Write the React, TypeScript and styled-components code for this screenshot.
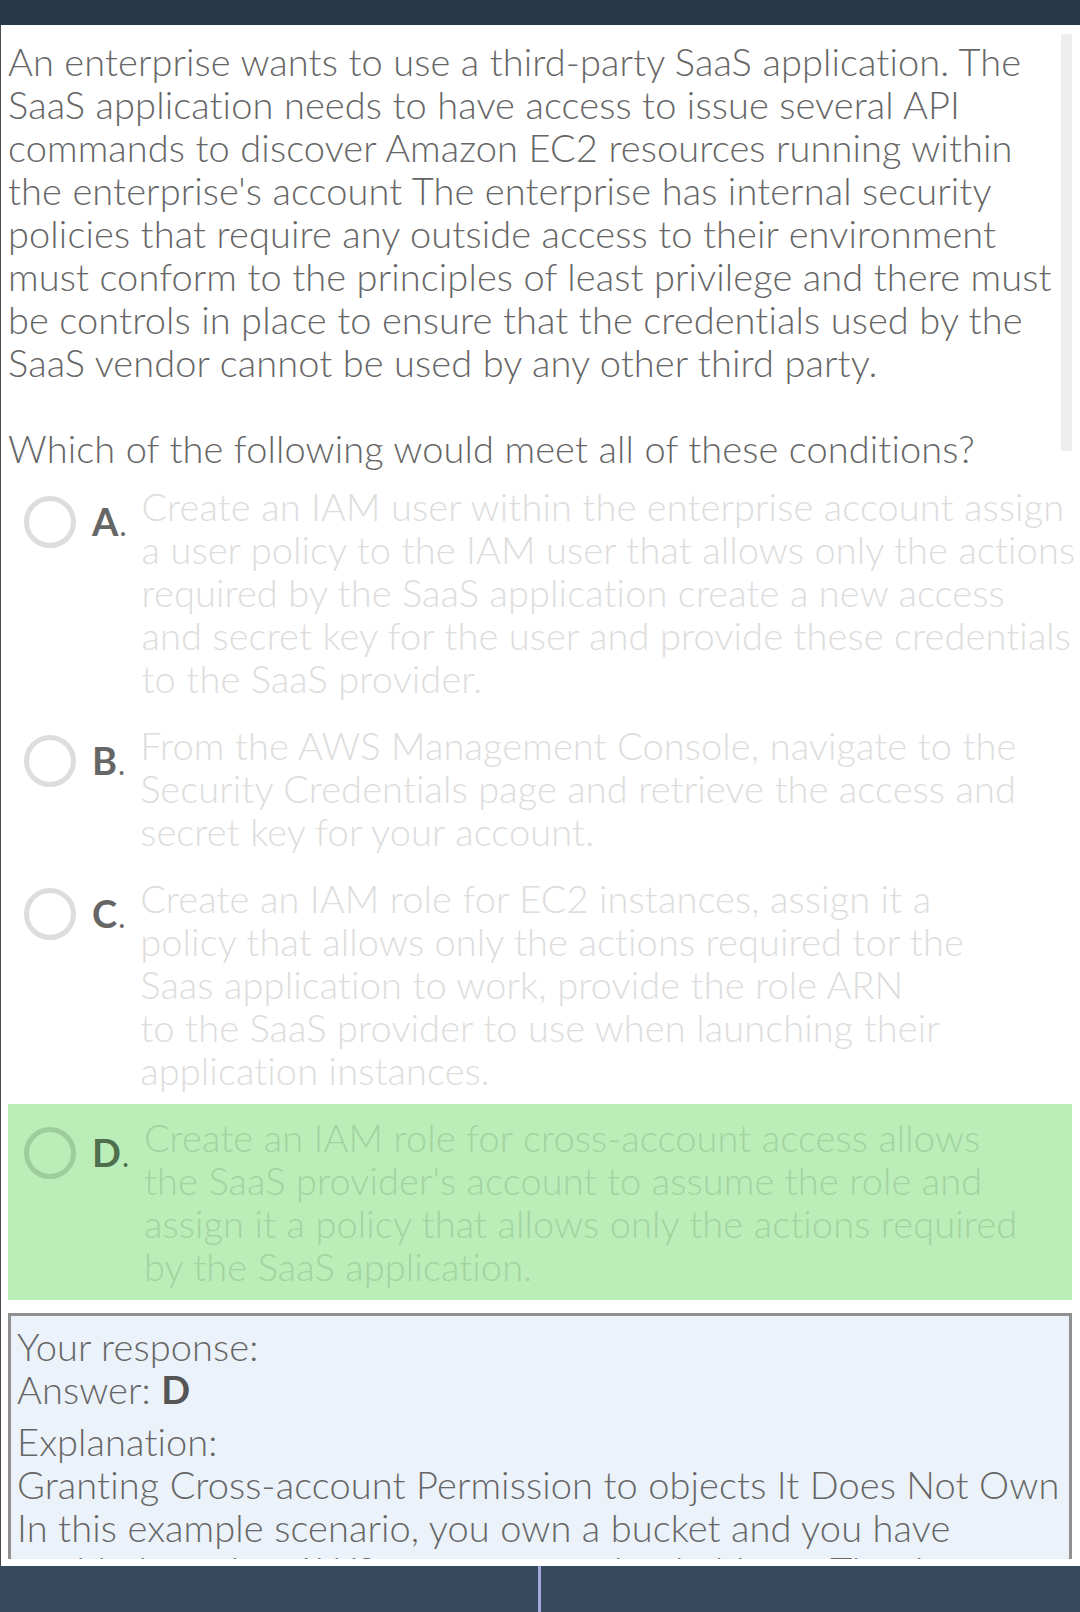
import React from "react";
import styled, { createGlobalStyle } from "styled-components";

const GlobalStyle = createGlobalStyle`
  html, body { margin: 0; padding: 0; background: #ffffff; }
  body { font-family: Lato, "Open Sans", sans-serif; }
  * { box-sizing: border-box; }
`;

const Page = styled.div`
  display: flex;
  flex-direction: column;
  height: 1612px;
  width: 1080px;
  overflow: hidden;
`;

const TopBar = styled.div`
  height: 25px;
  flex: none;
  background: #283747;
`;

const Main = styled.div`
  flex: 1;
  min-height: 0;
  display: flex;
  flex-direction: column;
  border-left: 1px solid #4a4a4a;
  padding-bottom: 7px;
  position: relative;
`;

const Scroller = styled.div`
  flex: 1;
  min-height: 0;
  overflow: hidden;
  padding: 15px 8px 0 7px;
  font-size: 38px;
  font-weight: 300;
  line-height: 43px;
  letter-spacing: 0.1px;
  color: #666666;
`;

const ScrollThumb = styled.div`
  position: absolute;
  top: 9px;
  right: 8px;
  width: 11px;
  height: 417px;
  background: #eeeeee;
`;

const Para = styled.div<{ $gap?: number }>`
  margin-top: ${(p) => p.$gap ?? 0}px;
`;

const Line = styled.div<{ $gap?: number }>`
  margin-top: ${(p) => p.$gap ?? 0}px;
  white-space: nowrap;
`;

const Options = styled.div`
  margin-top: 3px;
  display: flex;
  flex-direction: column;
`;

const OptionRow = styled.div<{ $correct?: boolean }>`
  display: flex;
  align-items: flex-start;
  padding: 12px 0 12px 16px;
  background: ${(p) => (p.$correct ? "#bbedb9" : "transparent")};
  color: ${(p) => (p.$correct ? "#a2d3a0" : "#dddddd")};
`;

const Radio = styled.span<{ $correct?: boolean }>`
  flex: none;
  width: 52px;
  height: 52px;
  margin-top: 11px;
  border-radius: 50%;
  border: 5px solid ${(p) => (p.$correct ? "#9ecc9c" : "#dddddd")};
`;

const Letter = styled.span<{ $correct?: boolean }>`
  flex: none;
  margin: 15px 15px 0 16px;
  font-weight: 700;
  font-size: 38px;
  letter-spacing: 0;
  color: ${(p) => (p.$correct ? "#4f6e4e" : "#666666")};
`;

const Dot = styled.span`
  font-weight: 400;
  font-size: 30px;
  margin-left: 1px;
`;

const OptionText = styled.div`
  flex: 1;
  min-width: 0;
`;

const Response = styled.div`
  margin-top: 13px;
  border: 3px solid #909090;
  background: #ebf2fa;
  padding: 9px 6px 20px 6px;
  color: #666666;
`;

const Strong = styled.b`
  font-weight: 700;
  color: #555555;
`;

const BottomBar = styled.div`
  height: 46px;
  flex: none;
  background: #354a5e;
  display: flex;
  padding-left: 538px;
`;

const Divider = styled.div`
  width: 3px;
  background: #a3a8dc;
`;

const question = [
  "An enterprise wants to use a third-party SaaS application. The",
  "SaaS application needs to have access to issue several API",
  "commands to discover Amazon EC2 resources running within",
  "the enterprise's account The enterprise has internal security",
  "policies that require any outside access to their environment",
  "must conform to the principles of least privilege and there must",
  "be controls in place to ensure that the credentials used by the",
  "SaaS vendor cannot be used by any other third party.",
];

const options = [
  {
    key: "A",
    lines: [
      "Create an IAM user within the enterprise account assign",
      "a user policy to the IAM user that allows only the actions",
      "required by the SaaS application create a new access",
      "and secret key for the user and provide these credentials",
      "to the SaaS provider.",
    ],
  },
  {
    key: "B",
    lines: [
      "From the AWS Management Console, navigate to the",
      "Security Credentials page and retrieve the access and",
      "secret key for your account.",
    ],
  },
  {
    key: "C",
    lines: [
      "Create an IAM role for EC2 instances, assign it a",
      "policy that allows only the actions required tor the",
      "Saas application to work, provide the role ARN",
      "to the SaaS provider to use when launching their",
      "application instances.",
    ],
  },
  {
    key: "D",
    correct: true,
    lines: [
      "Create an IAM role for cross-account access allows",
      "the SaaS provider's account to assume the role and",
      "assign it a policy that allows only the actions required",
      "by the SaaS application.",
    ],
  },
];

const explanation = [
  "Granting Cross-account Permission to objects It Does Not Own",
  "In this example scenario, you own a bucket and you have",
  "enabled another AWS account to upload objects. That is,",
  "your bucket can have objects that another AWS account",
  "owns.",
];

export default function App() {
  return (
    <Page>
      <GlobalStyle />
      <TopBar />
      <Main>
        <ScrollThumb />
        <Scroller>
          <Para>
            {question.map((l) => (
              <Line key={l}>{l}</Line>
            ))}
          </Para>
          <Para $gap={43}>
            <Line>Which of the following would meet all of these conditions?</Line>
          </Para>
          <Options>
            {options.map((o) => (
              <OptionRow key={o.key} $correct={o.correct}>
                <Radio $correct={o.correct} />
                <Letter $correct={o.correct}>
                  {o.key}
                  <Dot>.</Dot>
                </Letter>
                <OptionText>
                  {o.lines.map((l) => (
                    <Line key={l}>{l}</Line>
                  ))}
                </OptionText>
              </OptionRow>
            ))}
          </Options>
          <Response>
            <Line>Your response:</Line>
            <Line>
              Answer: <Strong>D</Strong>
            </Line>
            <Line $gap={9}>Explanation:</Line>
            {explanation.map((l) => (
              <Line key={l}>{l}</Line>
            ))}
          </Response>
        </Scroller>
      </Main>
      <BottomBar>
        <Divider />
      </BottomBar>
    </Page>
  );
}
